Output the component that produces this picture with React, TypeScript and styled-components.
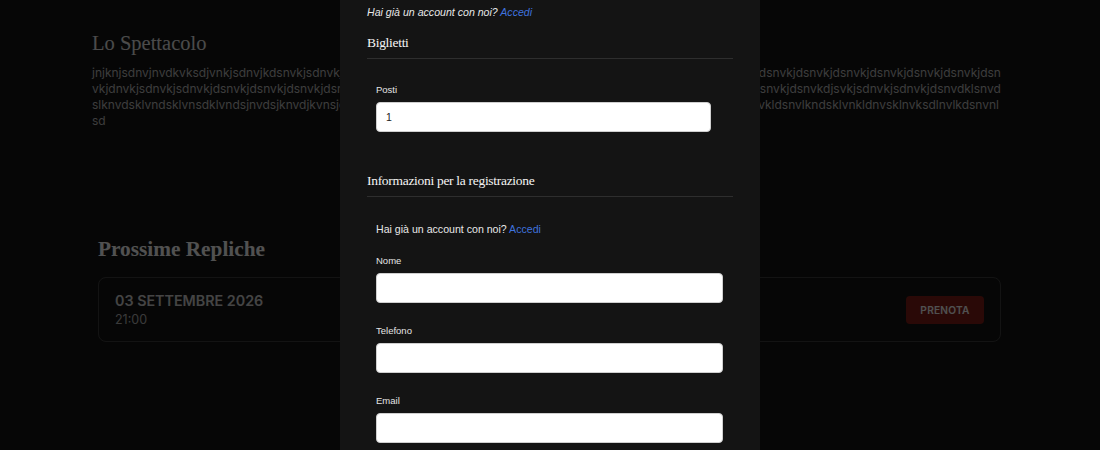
import * as React from "react";
import styled, { createGlobalStyle } from "styled-components";

const GlobalStyle = createGlobalStyle`
  html, body {
    margin: 0;
    padding: 0;
    background: #151515;
    font-family: Inter, "Liberation Sans", sans-serif;
    overflow: hidden;
  }
  * { box-sizing: border-box; }
`;

// placeholder description, one long unbroken "word" as typed into the CMS
const fill = (left: string, right: string, len: number) =>
  (left + "jdsnvkjsdnvkjdsnvk".repeat(12)).slice(0, len - right.length) + right;

const blurb =
  fill("jnjknjsdnvjnvdkvksdjvnkjsdnvjkdsnvkjsdnvkjdsnvk", "dsjnvkjdsnvkjdsnvkjdsnvkjdsnvkjdsnvkjdsnvkjdsn", 149) +
  fill("vkjdnvkjsdnvkjsdnvkjdsnvkjdsnvkjdsnvkjdsnvkjdsn", "snvkdjsnvkjdsnvkdjsvkjsdnvkjsdnvkjdsnvdklsnvds", 149) +
  fill("lknvdsklvndsklvnsdklvndsjnvdsjknvdjkvnsjdklnvdk", "lnsdlknvkldsnvlkndsklvnkldnvsklnvksdlnvlkdsnvnl", 149) +
  "sd";

const Page = styled.main`
  padding-top: 29px;
`;

const About = styled.section`
  padding: 0 96px 0 92px;
`;

const ShowTitle = styled.h1`
  margin: 0;
  font-family: "Liberation Serif", serif;
  font-weight: 400;
  font-size: 20.5px;
  line-height: 28px;
  color: #e2e2e2;
`;

const Blurb = styled.p`
  margin: 8px 0 0;
  font-size: 12px;
  line-height: 16px;
  color: #b8b8b8;
  word-break: break-all;
`;

const Dates = styled.section`
  margin-top: 106px;
  padding: 0 99px 0 98px;
`;

const DatesTitle = styled.h2`
  margin: 0 0 14px;
  font-family: "Liberation Serif", serif;
  font-weight: 700;
  font-size: 21.3px;
  line-height: 28px;
  color: #f6f6f6;
`;

const DateCard = styled.div`
  display: flex;
  align-items: center;
  justify-content: space-between;
  padding: 13px 16px;
  border: 1px solid #3c3c3c;
  border-radius: 8px;
`;

const DateDay = styled.div`
  font-size: 14.3px;
  line-height: 20px;
  font-weight: 600;
  color: #cfcfcf;
`;

const DateTime = styled.div`
  margin-top: 1px;
  font-size: 12.5px;
  line-height: 16px;
  color: #b0b0b0;
`;

const BookButton = styled.button`
  width: 78px;
  height: 28px;
  border: 0;
  border-radius: 4px;
  background: #801d16;
  color: #f2f2f2;
  font-family: Inter, "Liberation Sans", sans-serif;
  font-size: 10.2px;
  font-weight: 600;
  letter-spacing: 0.2px;
`;

const Overlay = styled.div`
  position: fixed;
  inset: 0;
  background: rgba(0, 0, 0, 0.67);
`;

const Modal = styled.div`
  position: fixed;
  top: 0;
  bottom: 0;
  left: 340px;
  width: 420px;
  background: #141414;
  overflow: hidden;
  font-family: "Liberation Sans", Arial, sans-serif;
`;

const ModalBody = styled.div`
  padding: 4px 27px;
`;

const Hint = styled.p<{ $italic?: boolean }>`
  margin: 0;
  font-size: 10.6px;
  line-height: 16px;
  color: #e8e8e8;
  font-style: ${(p) => (p.$italic ? "italic" : "normal")};
`;

const Link = styled.a`
  color: #3f72de;
  text-decoration: none;
`;

const SectionTitle = styled.h3<{ $gap: number }>`
  margin: ${(p) => p.$gap}px 0 0;
  padding-bottom: 5px;
  border-bottom: 1px solid #2e2e2e;
  font-family: "Liberation Serif", serif;
  font-weight: 400;
  font-size: 13.5px;
  letter-spacing: -0.3px;
  line-height: 20px;
  color: #f4f4f4;
`;

const Fields = styled.div`
  padding: 24px 10px 0 9px;
`;

const Field = styled.div<{ $gap?: number }>`
  margin-top: ${(p) => p.$gap ?? 0}px;
  display: flex;
  flex-direction: column;
`;

const Label = styled.label`
  font-size: 9.5px;
  line-height: 14px;
  color: #e4e4e4;
  margin-bottom: 5px;
`;

const Input = styled.input<{ $narrow?: boolean }>`
  width: ${(p) => (p.$narrow ? "335px" : "100%")};
  height: 30px;
  border: 1px solid #cfcfcf;
  border-radius: 4px;
  background: #fff;
  padding: 0 9px;
  font-family: "Liberation Sans", Arial, sans-serif;
  font-size: 10.5px;
  color: #222;
  outline: none;
`;

export default function App() {
  return (
    <>
      <GlobalStyle />
      <Page>
        <About>
          <ShowTitle>Lo Spettacolo</ShowTitle>
          <Blurb>{blurb}</Blurb>
        </About>
        <Dates>
          <DatesTitle>Prossime Repliche</DatesTitle>
          <DateCard>
            <div>
              <DateDay>03 SETTEMBRE 2026</DateDay>
              <DateTime>21:00</DateTime>
            </div>
            <BookButton>PRENOTA</BookButton>
          </DateCard>
        </Dates>
      </Page>
      <Overlay />
      <Modal>
        <ModalBody>
          <Hint $italic>
            Hai già un account con noi? <Link href="#">Accedi</Link>
          </Hint>
          <SectionTitle $gap={13}>Biglietti</SectionTitle>
          <Fields>
            <Field>
              <Label>Posti</Label>
              <Input $narrow defaultValue="1" />
            </Field>
          </Fields>
          <SectionTitle $gap={39}>Informazioni per la registrazione</SectionTitle>
          <Fields>
            <Hint>
              Hai già un account con noi? <Link href="#">Accedi</Link>
            </Hint>
            <Field $gap={17}>
              <Label>Nome</Label>
              <Input />
            </Field>
            <Field $gap={21}>
              <Label>Telefono</Label>
              <Input />
            </Field>
            <Field $gap={21}>
              <Label>Email</Label>
              <Input />
            </Field>
          </Fields>
        </ModalBody>
      </Modal>
    </>
  );
}
